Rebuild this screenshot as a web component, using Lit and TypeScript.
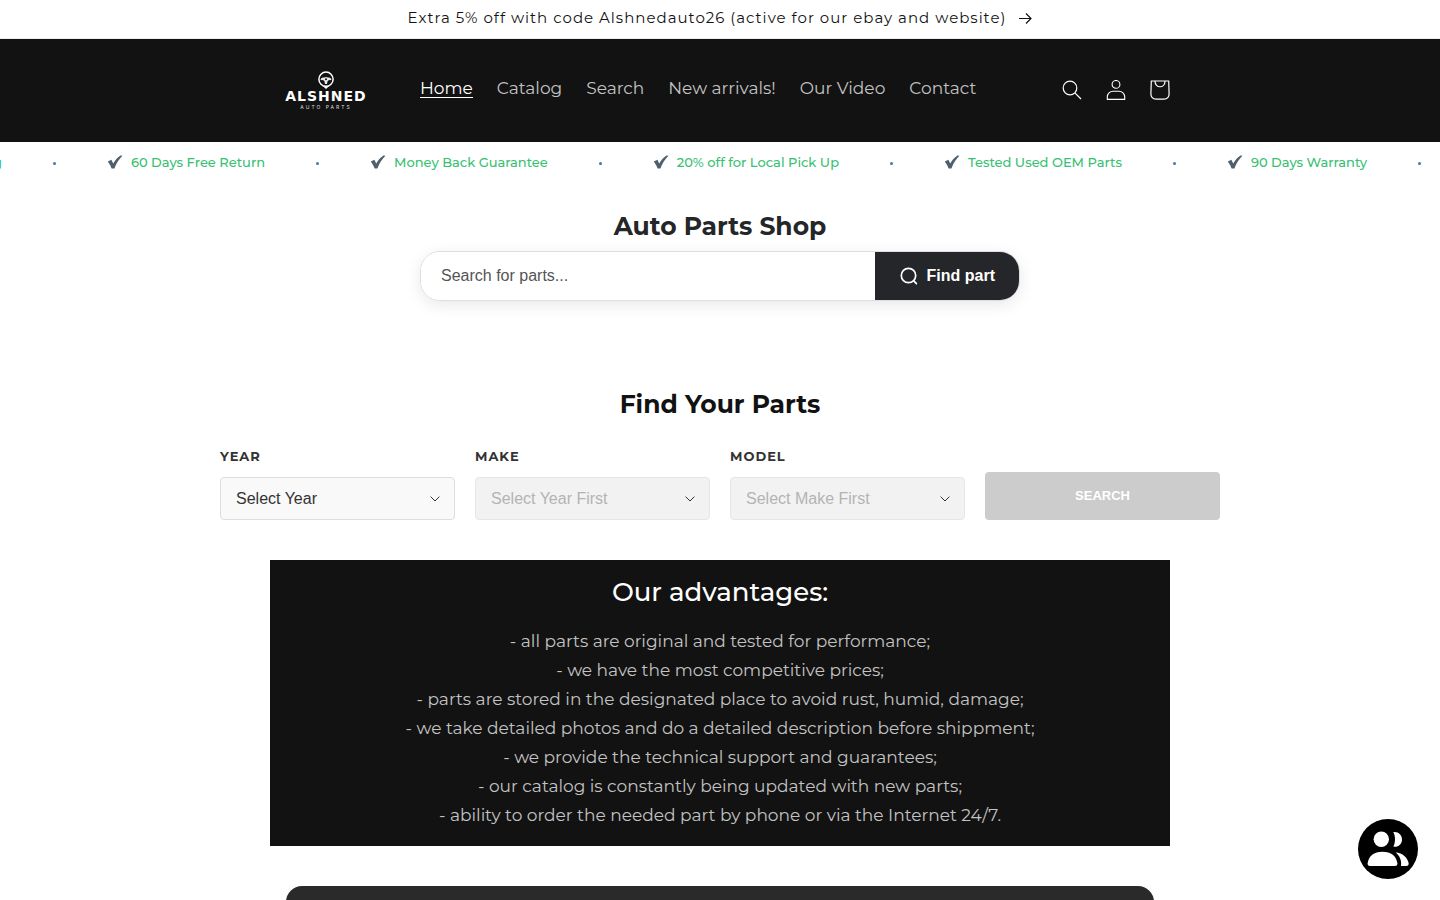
import { LitElement, html, css, svg } from "lit";
import { customElement, state } from "lit/decorators.js";

const NAV = ["Home", "Catalog", "Search", "New arrivals!", "Our Video", "Contact"];
const PERKS = [
  "Fast Shipping",
  "60 Days Free Return",
  "Money Back Guarantee",
  "20% off for Local Pick Up",
  "Tested Used OEM Parts",
  "90 Days Warranty",
];
const ADVANTAGES = [
  "all parts are original and tested for performance;",
  "we have the most competitive prices;",
  "parts are stored in the designated place to avoid rust, humid, damage;",
  "we take detailed photos and do a detailed description before shippment;",
  "we provide the technical support and guarantees;",
  "our catalog is constantly being updated with new parts;",
  "ability to order the needed part by phone or via the Internet 24/7.",
];
const FIELDS = [
  { id: "year", label: "Year", hint: "Select Year", disabled: false },
  { id: "make", label: "Make", hint: "Select Year First", disabled: true },
  { id: "model", label: "Model", hint: "Select Make First", disabled: true },
];

const wheel = svg`
  <circle cx="9" cy="8.2" r="7.1" fill="none" stroke="#fff" stroke-width="1.5"/>
  <path d="M3.6 8Q5 6.4 7.2 6.6Q9 5.2 10.8 6.6Q13 6.4 14.4 8L14 9.2Q11.6 8.8 10.6 10.2L10 13H8L7.4 10.2Q6.4 8.8 4 9.2Z" fill="#e8e8e8"/>
  <circle cx="9" cy="8.2" r="1" fill="#121212"/>
  <path d="M5 14.3Q9 16 13 14.3L9 18Z" fill="#fff"/>`;

@customElement("app-root")
export class AppRoot extends LitElement {
  @state() private query = "";

  static styles = css`
    :host {
      display: block;
      height: 100vh;
      overflow: auto;
      scrollbar-width: none;
      background: #fff;
      color: #121212;
      font-family: Montserrat, Inter, "Open Sans", sans-serif;
      font-size: 17px;
    }
    * { box-sizing: border-box; }
    a { color: inherit; text-decoration: none; }
    h1, h2, ul { margin: 0; padding: 0; }
    ul { list-style: none; }
    svg { display: block; flex: none; }
    .announcement {
      display: flex;
      justify-content: center;
      align-items: center;
      gap: 12px;
      height: 39px;
      padding-bottom: 3px;
      border-bottom: 1px solid #ececec;
      font-size: 15px;
      letter-spacing: 1px;
    }
    .header { background: #121212; color: #fff; }
    .header-inner {
      display: flex;
      align-items: center;
      max-width: 900px;
      height: 103px;
      margin: 0 auto;
      padding: 0 0 2px 14px;
    }
    .logo {
      display: flex;
      flex-direction: column;
      align-items: center;
      width: 84px;
      margin-right: 40px;
      padding-top: 2px;
    }
    .logo-name {
      margin-top: 1px;
      font: bold 14px/13px "DejaVu Sans", sans-serif;
      letter-spacing: 1px;
    }
    .logo-sub {
      margin-top: 1px;
      font: 5px/6px Inter, sans-serif;
      letter-spacing: 2px;
      color: #ddd;
    }
    .nav { display: flex; flex: 1; padding-bottom: 2px; }
    .nav-link { padding: 0 12px; color: #c3c3c3; white-space: nowrap; }
    .nav-label { display: block; line-height: 18px; border-bottom: 1px solid transparent; }
    .nav-link.active { color: #fff; }
    .nav-link.active .nav-label { border-color: #fff; }
    .icons { display: flex; margin-right: -12px; }
    .icon-button {
      display: grid;
      place-items: center;
      width: 44px;
      height: 44px;
      padding: 0;
      border: 0;
      background: none;
      color: #fff;
    }
    .ticker { overflow: hidden; height: 42px; }
    .track {
      display: flex;
      align-items: center;
      width: max-content;
      height: 40px;
      margin-left: -113px;
      color: #38c172;
      font-size: 13px;
      font-weight: 500;
    }
    .perk { display: flex; align-items: center; white-space: nowrap; }
    .perk-mark { margin-right: 8px; }
    .dot { width: 3px; height: 3px; margin: 2px 51px 0; border-radius: 2px; background: #3d78b0; }
    .shop { max-width: 600px; margin: 0 auto; padding-top: 26px; }
    .title { font-size: 25px; line-height: 32px; font-weight: 700; text-align: center; }
    .shop .title { color: #242628; }
    .search {
      display: flex;
      height: 50px;
      margin-top: 9px;
      overflow: hidden;
      border: 1px solid #dedede;
      border-radius: 20px;
      box-shadow: 0 4px 16px rgba(0, 0, 0, 0.09);
    }
    .search-input {
      flex: 1;
      min-width: 0;
      padding: 0 20px;
      border: 0;
      outline: 0;
      font: 16px "Liberation Sans", Arial, sans-serif;
    }
    .search-input::placeholder { color: #555; }
    .search-button {
      display: flex;
      align-items: center;
      gap: 8px;
      padding: 0 24px;
      border: 0;
      background: #242629;
      color: #fff;
      font: bold 16px "Liberation Sans", Arial, sans-serif;
    }
    .finder { max-width: 1000px; margin: 0 auto; padding-top: 87px; }
    .finder-form {
      display: grid;
      grid-template-columns: repeat(4, 1fr);
      align-items: end;
      gap: 20px;
      margin-top: 27px;
    }
    .field-label {
      display: block;
      margin-bottom: 12px;
      font-size: 13px;
      line-height: 18px;
      font-weight: 700;
      letter-spacing: 1px;
      text-transform: uppercase;
      color: #333;
    }
    .select-box { display: grid; align-items: center; }
    .select-box > * { grid-area: 1 / 1; }
    .select {
      appearance: none;
      width: 100%;
      height: 43px;
      padding: 0 15px;
      border: 1px solid #ddd;
      border-radius: 4px;
      background: #f9f9f9;
      color: #333;
      font: 16px "Liberation Sans", Arial, sans-serif;
      opacity: 1;
    }
    .select:disabled { background: #f2f2f2; border-color: #e6e6e6; color: #b4b4b4; }
    .chevron { justify-self: end; margin-right: 15px; pointer-events: none; }
    .submit {
      height: 48px;
      padding-bottom: 3px;
      border: 0;
      border-radius: 4px;
      background: #ccc;
      color: #fff;
      font: bold 13px "Liberation Sans", Arial, sans-serif;
    }
    .advantages {
      max-width: 900px;
      margin: 40px auto 0;
      padding: 16px 20px;
      background: #121212;
      color: #c3c3c3;
      text-align: center;
    }
    .advantages-title { margin-bottom: 18px; color: #fff; font-size: 26px; line-height: 33px; font-weight: 500; }
    .advantage { line-height: 29px; }
    .card {
      max-width: 868px;
      height: 240px;
      margin: 40px auto;
      border-radius: 16px;
      background: #2a2a2a;
    }
    .chat {
      position: fixed;
      right: 22px;
      bottom: 21px;
      width: 60px;
      height: 60px;
      padding: 0;
      border: 0;
      border-radius: 50%;
      background: #000;
    }
  `;

  render() {
    return html`
      <a class="announcement" href="#sale">
        <span>Extra 5% off with code Alshnedauto26 (active for our ebay and website)</span>
        <svg width="14" height="12" viewBox="0 0 14 12" fill="none" stroke="#121212" stroke-width="1.2"><path d="M1 6.5H13M8 1.5L13 6.5L8 11.5"/></svg>
      </a>

      <header class="header">
        <div class="header-inner">
          <a class="logo" href="#home" aria-label="Alshned Auto Parts">
            <svg width="18" height="18" viewBox="0 0 18 18">${wheel}</svg>
            <span class="logo-name">ALSHNED</span>
            <span class="logo-sub">AUTO PARTS</span>
          </a>
          <nav class="nav">
            ${NAV.map((n, i) => html`<a class="nav-link ${i === 0 ? "active" : ""}" href="#nav"><span class="nav-label">${n}</span></a>`)}
          </nav>
          <div class="icons">
            <button class="icon-button" aria-label="Search">
              <svg width="20" height="20" viewBox="0 0 20 20" fill="none" stroke="currentColor" stroke-width="1.2"><circle cx="8" cy="8" r="6.8"/><path d="M12.9 12.9L19 19"/></svg>
            </button>
            <button class="icon-button" aria-label="Log in">
              <svg width="20" height="20" viewBox="0 0 20 20" fill="none" stroke="currentColor" stroke-width="1.1"><circle cx="10" cy="4.4" r="3.9"/><path d="M1.3 19.4V17C1.3 13.5 4 11.2 7 11.2H13C16 11.2 18.7 13.5 18.7 17V19.4Z"/></svg>
            </button>
            <button class="icon-button" aria-label="Cart">
              <svg width="20" height="20" viewBox="0 0 20 20" fill="none" stroke="currentColor" stroke-width="1.2"><path d="M1.3 1H18.7L19.1 14C19.2 17 17.2 19.1 14 19.1H6C2.8 19.1 .8 17 .9 14ZM5 1.2C5 8.6 15 8.6 15 1.2"/></svg>
            </button>
          </div>
        </div>
      </header>

      <div class="ticker">
        <div class="track">
          ${PERKS.map(
            (p) => html`<span class="perk">
              <svg class="perk-mark" width="16" height="14" viewBox="0 0 16 14"><path d="M.8 6.4L4.4 4.8L6.2 8.6C8 5.2 10.4 2.4 13.4 .4L15.4 .8C12 4.2 9.6 8 7.4 13.4H4.6C3.6 10.8 2.4 8.6 .8 6.4Z" fill="#4f5f6b"/></svg>
              <span>${p}</span><span class="dot"></span>
            </span>`
          )}
        </div>
      </div>

      <section class="shop">
        <h1 class="title">Auto Parts Shop</h1>
        <form class="search" @submit=${(e: Event) => e.preventDefault()}>
          <input class="search-input" type="search" aria-label="Search for parts" placeholder="Search for parts..." .value=${this.query}
            @input=${(e: Event) => (this.query = (e.target as HTMLInputElement).value)} />
          <button class="search-button">
            <svg width="20" height="20" viewBox="0 0 20 20" fill="none" stroke="#fff" stroke-width="1.7" stroke-linecap="round"><circle cx="9.5" cy="9.5" r="7.2"/><path d="M14.8 14.8L17.4 17.6"/></svg>
            <span>Find part</span>
          </button>
        </form>
      </section>

      <section class="finder">
        <h2 class="title">Find Your Parts</h2>
        <form class="finder-form" @submit=${(e: Event) => e.preventDefault()}>
          ${FIELDS.map(
            (f) => html`<div>
              <label class="field-label" for=${f.id}>${f.label}</label>
              <div class="select-box">
                <select class="select" id=${f.id} ?disabled=${f.disabled}><option>${f.hint}</option></select>
                <svg class="chevron" width="10" height="6" viewBox="0 0 10 6" fill="none" stroke="#333" stroke-width="1"><path d="M.6 .6L5 5L9.4 .6"/></svg>
              </div>
            </div>`
          )}
          <button class="submit" disabled>SEARCH</button>
        </form>
      </section>

      <section class="advantages">
        <h2 class="advantages-title">Our advantages:</h2>
        <ul>
          ${ADVANTAGES.map((a) => html`<li class="advantage">- ${a}</li>`)}
        </ul>
      </section>

      <section class="card"></section>

      <button class="chat" aria-label="Contact us">
        <svg width="60" height="60" viewBox="0 0 60 60" fill="#fff">
          <circle cx="23.3" cy="20.3" r="7.7"/>
          <path d="M35.3 13C40 12.2 44 15.6 44 20.4S40 28.4 35.3 27.6C37.6 23.5 37.6 17.5 35.3 13Z"/>
          <path d="M9.6 44.5C10.5 37 16 32.7 24.5 32.7S38.5 37 39.4 44.5C39.4 46.2 38.5 47 37 47H12C10.5 47 9.6 46.2 9.6 44.5Z"/>
          <path d="M37.6 33.6C44.5 33.6 49.8 39 50.7 44.5C50.7 46.2 49.8 47 48.3 47H43C43.8 41.5 41.8 37 37.6 33.6Z"/>
        </svg>
      </button>
    `;
  }
}
